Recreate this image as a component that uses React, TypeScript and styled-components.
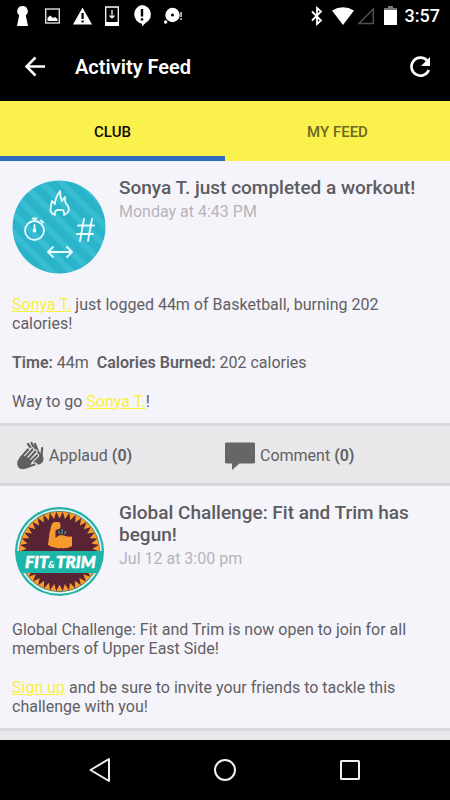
import React from "react";
import styled, { createGlobalStyle } from "styled-components";

const Global = createGlobalStyle`
  *, *::before, *::after { box-sizing: border-box; }
  body { margin: 0; background: #000; font-family: Roboto, "Liberation Sans", sans-serif; }
  button { font-family: inherit; padding: 0; border: 0; background: none; cursor: pointer; }
`;

const Screen = styled.div`
  display: flex;
  flex-direction: column;
  height: 100vh;
  background: #f6f4fb;
`;

const StatusBar = styled.div`
  flex: none;
  display: flex;
  align-items: center;
  justify-content: space-between;
  height: 32px;
  padding: 0 10px 0 12px;
  background: #000;
  color: #fff;
  svg { display: block; }
`;

const StatusGroup = styled.div<{ $gap: number }>`
  display: flex;
  align-items: center;
  gap: ${(p) => p.$gap}px;
`;

const Clock = styled.span`
  margin-left: 5px;
  font-size: 18px;
  line-height: 24px;
  font-weight: 500;
`;

const AppBar = styled.header`
  flex: none;
  display: flex;
  align-items: center;
  height: 69px;
  padding: 0 16px 0 21px;
  background: #000;
  color: #fff;
`;

const Title = styled.h1`
  flex: 1;
  margin: 0 0 0 26px;
  font-size: 20px;
  line-height: 24px;
  font-weight: 600;
`;

const IconButton = styled.button`
  display: flex;
  align-items: center;
  justify-content: center;
  width: 28px;
  height: 28px;
  color: #fff;
`;

const Tabs = styled.div`
  flex: none;
  display: grid;
  grid-template-columns: 1fr 1fr;
  height: 60px;
  background: #faf14c;
`;

const Tab = styled.button<{ $active?: boolean }>`
  padding-top: 7px;
  border-bottom: 5px solid ${(p) => (p.$active ? "#2c6bbd" : "transparent")};
  color: ${(p) => (p.$active ? "#0c0c04" : "#6d6920")};
  font-size: 15px;
  font-weight: 500;
`;

const Feed = styled.main`
  flex: 1;
  min-height: 0;
  overflow-y: auto;
  scrollbar-width: none;
`;

const Post = styled.article`
  color: #606063;
`;

const PostHead = styled.div`
  display: flex;
  gap: 12px;
  padding: 16px 12px 0;
`;

const Avatar = styled.svg`
  flex: none;
  display: block;
  width: 95px;
  height: 102px;
`;

const PostTitle = styled.h2`
  margin: 0;
  font-size: 19px;
  line-height: 22px;
  font-weight: 500;
  color: #5c5c60;
`;

const PostTime = styled.time`
  display: block;
  margin-top: 2px;
  font-size: 16px;
  line-height: 22px;
  color: #b5b4b9;
`;

const PostBody = styled.div`
  padding: 16px 12px 12px;
  font-size: 16px;
  line-height: 19px;
  p { margin: 0 0 20px; }
  p:last-child { margin-bottom: 0; }
  b { font-weight: 600; }
`;

const Link = styled.a`
  color: #f9f03a;
  text-decoration: underline;
`;

const Actions = styled.div`
  display: grid;
  grid-template-columns: 1fr 1fr;
  height: 63px;
  border-top: 3px solid #d9d7db;
  border-bottom: 3px solid #d9d7db;
  background: #e8e8ea;
`;

const Action = styled.button<{ $inset: number }>`
  display: flex;
  align-items: center;
  gap: 5px;
  padding: 2px 0 0 ${(p) => p.$inset}px;
  font-size: 16px;
  color: #606063;
  b { font-weight: 600; }
`;

const NavBar = styled.nav`
  flex: none;
  display: flex;
  justify-content: center;
  gap: 85px;
  height: 60px;
  background: #000;
`;

const NavButton = styled.button`
  display: flex;
  align-items: center;
  justify-content: center;
  width: 40px;
`;

const Keyhole = () => (
  <svg width="20" height="24" viewBox="0 0 20 24" fill="#fff">
    <path d="M10.500 2a5.200 5.200 0 0 1 3.300 9.300L16 22H5l2.200-10.700A5.200 5.200 0 0 1 10.500 2z" />
  </svg>
);
const Picture = () => (
  <svg width="17" height="18" viewBox="0 0 17 18">
    <rect x="1.700" y="2" width="13.600" height="14" fill="none" stroke="#ddd" strokeWidth="1.400" />
    <path d="M3.500 14v-3l2.500-2.500 3 2.500 2-1 2.500 2v2z" fill="#fff" />
  </svg>
);
const Warning = () => (
  <svg width="19" height="20" viewBox="0 0 19 20">
    <path d="M9.500 1.500 19 18.500H0z" fill="#fff" />
    <path d="M8.500 7h2.200v6H8.500zM8.500 14.500h2.200v2H8.500z" fill="#000" />
  </svg>
);
const Download = () => (
  <svg width="16" height="22" viewBox="0 0 16 22">
    <path d="M1.700 2h12.600v18H1.700z" fill="none" stroke="#fff" strokeWidth="1.300" />
    <path d="M1 17h14v4H1z" fill="#fff" />
    <path d="M8 5v8M5.500 10.500 8 13l2.500-2.500" fill="none" stroke="#fff" strokeWidth="1.200" />
  </svg>
);
const Alert = () => (
  <svg width="20" height="22" viewBox="0 0 20 22">
    <path d="M10 0a9.500 9.500 0 0 1 3.500 18L10 21.500v-2.800A9.500 9.500 0 0 1 10 0z" fill="#fff" />
    <path d="M8.800 4h2.400v7.500H8.800zM8.800 13.200h2.400v2.200H8.800z" fill="#000" />
  </svg>
);
const Disc = () => (
  <svg width="20" height="20" viewBox="0 0 20 20">
    <circle cx="8.500" cy="9" r="7.200" fill="#fff" />
    <circle cx="8.500" cy="9" r="1.500" fill="#000" />
    <circle cx="1.600" cy="16" r="2" fill="#fff" stroke="#000" strokeWidth="0.600" />
    <path d="M16.300 6h1.600v5h-1.600zM16.300 12.300h1.600v1.600h-1.600z" fill="#ccc" />
  </svg>
);
const Bluetooth = () => (
  <svg width="19" height="20" viewBox="0 0 19 20" fill="none" stroke="#fff" strokeWidth="1.800">
    <path d="m2 5.500 9 9L7 18V2l4 3.500-9 9" />
  </svg>
);
const Wifi = () => (
  <svg width="22" height="18" viewBox="0 0 22 18">
    <path d="M0 3.500Q11-3 22 3.500L11 18z" fill="#fff" />
  </svg>
);
const Signal = () => (
  <svg width="24" height="18" viewBox="0 0 24 18">
    <path d="M16.300 2v14.500H2z" fill="none" stroke="#505050" strokeWidth="1.500" />
  </svg>
);
const Battery = () => (
  <svg width="13" height="20" viewBox="0 0 13 20">
    <path d="M4 0h5v2h4v3H0V2h4z" fill="#777" />
    <path d="M0 4h13v15H0z" fill="#fff" />
  </svg>
);

const WorkoutAvatar = () => (
  <Avatar viewBox="0 0 95 102" role="img" aria-label="Workout">
    <defs>
      <pattern id="stripes" width="14" height="14" patternUnits="userSpaceOnUse" patternTransform="rotate(-45)">
        <rect width="14" height="14" fill="#2ab4ca" />
        <rect width="6" height="14" fill="#38bdd2" />
      </pattern>
    </defs>
    <circle cx="47" cy="50" r="46.500" fill="url(#stripes)" />
    <g fill="none" stroke="#e9fafc" strokeWidth="1.800" strokeLinecap="round" strokeLinejoin="round">
      <path d="M43 38q-6-2-4-8 0-3 1-6l3 3q0-6 5-13 0 6 2 10l3-4q-1 5 3 9 3 6-4 9 1-6-4-5-6-1-5 5z" />
      <circle cx="22.500" cy="53.500" r="9.500" />
      <path d="M22.500 43.500v-2m-2 0h4M29 43.500l2 2M22.500 48v5.500" />
      <circle cx="22.500" cy="53.500" r="1" />
      <path d="m72 42-4 22M80 42l-4 22M66 48.500h16M65 57h16" />
      <path d="M36 75h24m-19-5-5 5 5 5m14-10 5 5-5 5" />
    </g>
  </Avatar>
);

const rays = (from: number, to: number, count: number) =>
  Array.from({ length: count }, (_, i) => {
    const step = (to - from) / count;
    const at = (deg: number, r: number) => {
      const a = (deg * Math.PI) / 180;
      return `${(47.5 + r * Math.cos(a)).toFixed(2)} ${(49.5 + r * Math.sin(a)).toFixed(2)}`;
    };
    const start = from + i * step;
    return `M${at(start, 40)}L${at(start + step / 2, 33)}L${at(start + step, 40)}Z`;
  }).join("");

const FitAvatar = () => (
  <Avatar viewBox="0 0 95 102" role="img" aria-label="Fit & Trim">
    <defs>
      <clipPath id="badge"><circle cx="47.500" cy="49.500" r="43.500" /></clipPath>
    </defs>
    <circle cx="47.500" cy="49.500" r="44.500" fill="#23b3a7" />
    <circle cx="47.500" cy="49.500" r="41.500" fill="none" stroke="#eef7f5" strokeWidth="1.500" />
    <circle cx="47.500" cy="49.500" r="40" fill="#592336" />
    <path d={rays(180, 360, 19)} fill="#f79a2c" />
    <path d={rays(30, 150, 13)} fill="#f79a2c" />
    <path d="M3 49h89v22H3z" fill="#1cb5a8" clipPath="url(#badge)" />
    <path d="M36 43l1.500-12 2-8q1-3 4-3h3q2 .5 2 3v2q-.5 2.500-3.500 2.500l-1.500 1V36q4-4 8.500-2.500Q54 35 60 34.500V44q-5 3-11 2-7 1-13-3z" fill="#f79a2c" />
    <path d="m46.500 29 1.500 3m2-5v5m4-3-1.500 3" stroke="#23b3a7" strokeWidth="1.200" />
    <g fill="#fff" fontFamily="Lato, sans-serif" fontStyle="italic" fontWeight="900" stroke="#fff" strokeWidth="0.500">
      <text x="13" y="66" fontSize="17">FIT</text>
      <text x="36" y="66" fontSize="10" strokeWidth="0">&amp;</text>
      <text x="44" y="66" fontSize="17">TRIM</text>
    </g>
  </Avatar>
);

const Hands = () => (
  <svg width="27" height="29" viewBox="0 0 27 29" fill="none" strokeLinecap="round" strokeLinejoin="round">
    <g stroke="#5f5f61" strokeWidth="2.200">
      <path d="m11 3 9 13M14.500 2l6.500 12M18 3l4 10M25.200 7l-.8 8" />
      <path d="m18 12 4 0 2.500 2 1 4q-.5 3.500-4 4.500l-4-1z" fill="#5f5f61" />
    </g>
    <g stroke="#e8e8ea" strokeWidth="4.400">
      <path d="m4 17 7-8.500M7 19l8.500-10.500M10 20l8.500-9.500M12 22l8-7.500M10 26l8-2.500" />
    </g>
    <g stroke="#5f5f61" strokeWidth="2.200">
      <path d="m3.500 17 7.500-8.500M6 19l9.500-10.500M9 21l9.500-10.500M11 23l9-8.500M9 26.500l8.500-3" />
      <path d="M3.500 17.500Q.5 21 1.700 24.500 3 27.500 7 27l4-1.500 2.500-4-2-3.500L6.500 16z" fill="#5f5f61" />
    </g>
  </svg>
);
const Bubble = () => (
  <svg width="30" height="28" viewBox="0 0 30 28">
    <path d="M1.500.5h27Q30 .5 30 2v18q0 1.500-1.500 1.500H14.500L7 28v-6.500H1.500Q0 21.500 0 20V2Q0 .5 1.500.5z" fill="#666668" />
  </svg>
);

const PostActions = () => (
  <Actions>
    <Action type="button" $inset={17}>
      <Hands />
      <span>Applaud <b>(0)</b></span>
    </Action>
    <Action type="button" $inset={0}>
      <Bubble />
      <span>Comment <b>(0)</b></span>
    </Action>
  </Actions>
);

export default function App() {
  return (
    <Screen>
      <Global />
      <StatusBar>
        <StatusGroup $gap={12}>
          <Keyhole /><Picture /><Warning /><Download /><Alert /><Disc />
        </StatusGroup>
        <StatusGroup $gap={3}>
          <Bluetooth /><Wifi /><Signal /><Battery />
          <Clock>3:57</Clock>
        </StatusGroup>
      </StatusBar>
      <AppBar>
        <IconButton type="button" aria-label="Back">
          <svg width="28" height="28" viewBox="0 0 28 28" fill="none" stroke="#fff" strokeWidth="2.500">
            <path d="M24 13.500H6M14.500 4.500l-9 9 9 9" />
          </svg>
        </IconButton>
        <Title>Activity Feed</Title>
        <IconButton type="button" aria-label="Refresh">
          <svg width="28" height="28" viewBox="0 0 28 28">
            <path d="M21 7.500A9 9 0 1 0 22.800 17" fill="none" stroke="#fff" strokeWidth="2.600" />
            <path d="M24 4v9h-9z" fill="#fff" />
          </svg>
        </IconButton>
      </AppBar>
      <Tabs role="tablist">
        <Tab type="button" role="tab" aria-selected="true" $active>CLUB</Tab>
        <Tab type="button" role="tab" aria-selected="false">MY FEED</Tab>
      </Tabs>
      <Feed>
        <Post>
          <PostHead>
            <WorkoutAvatar />
            <div>
              <PostTitle>Sonya T. just completed a workout!</PostTitle>
              <PostTime>Monday at 4:43 PM</PostTime>
            </div>
          </PostHead>
          <PostBody>
            <p><Link href="#sonya">Sonya T.</Link> just logged 44m of Basketball, burning 202 calories!</p>
            <p><b>Time:</b> 44m&nbsp; <b>Calories Burned:</b> 202 calories</p>
            <p>Way to go <Link href="#sonya">Sonya T.</Link>!</p>
          </PostBody>
          <PostActions />
        </Post>
        <Post>
          <PostHead>
            <FitAvatar />
            <div>
              <PostTitle>Global Challenge: Fit and Trim has begun!</PostTitle>
              <PostTime>Jul 12 at 3:00 pm</PostTime>
            </div>
          </PostHead>
          <PostBody>
            <p>Global Challenge: Fit and Trim is now open to join for all members of Upper East Side!</p>
            <p><Link href="#signup">Sign up</Link> and be sure to invite your friends to tackle this challenge with you!</p>
          </PostBody>
          <PostActions />
        </Post>
      </Feed>
      <NavBar>
        <NavButton type="button" aria-label="Back">
          <svg width="24" height="26" viewBox="0 0 24 26" fill="none" stroke="#f0f0f0" strokeWidth="2" strokeLinejoin="round">
            <path d="M21 2v22L2.500 13z" />
          </svg>
        </NavButton>
        <NavButton type="button" aria-label="Home">
          <svg width="24" height="24" viewBox="0 0 24 24" fill="none" stroke="#f0f0f0" strokeWidth="2">
            <circle cx="12" cy="12" r="10" />
          </svg>
        </NavButton>
        <NavButton type="button" aria-label="Recent apps">
          <svg width="24" height="24" viewBox="0 0 24 24" fill="none" stroke="#f0f0f0" strokeWidth="2">
            <rect x="3" y="3" width="18" height="18" rx="0.500" />
          </svg>
        </NavButton>
      </NavBar>
    </Screen>
  );
}
